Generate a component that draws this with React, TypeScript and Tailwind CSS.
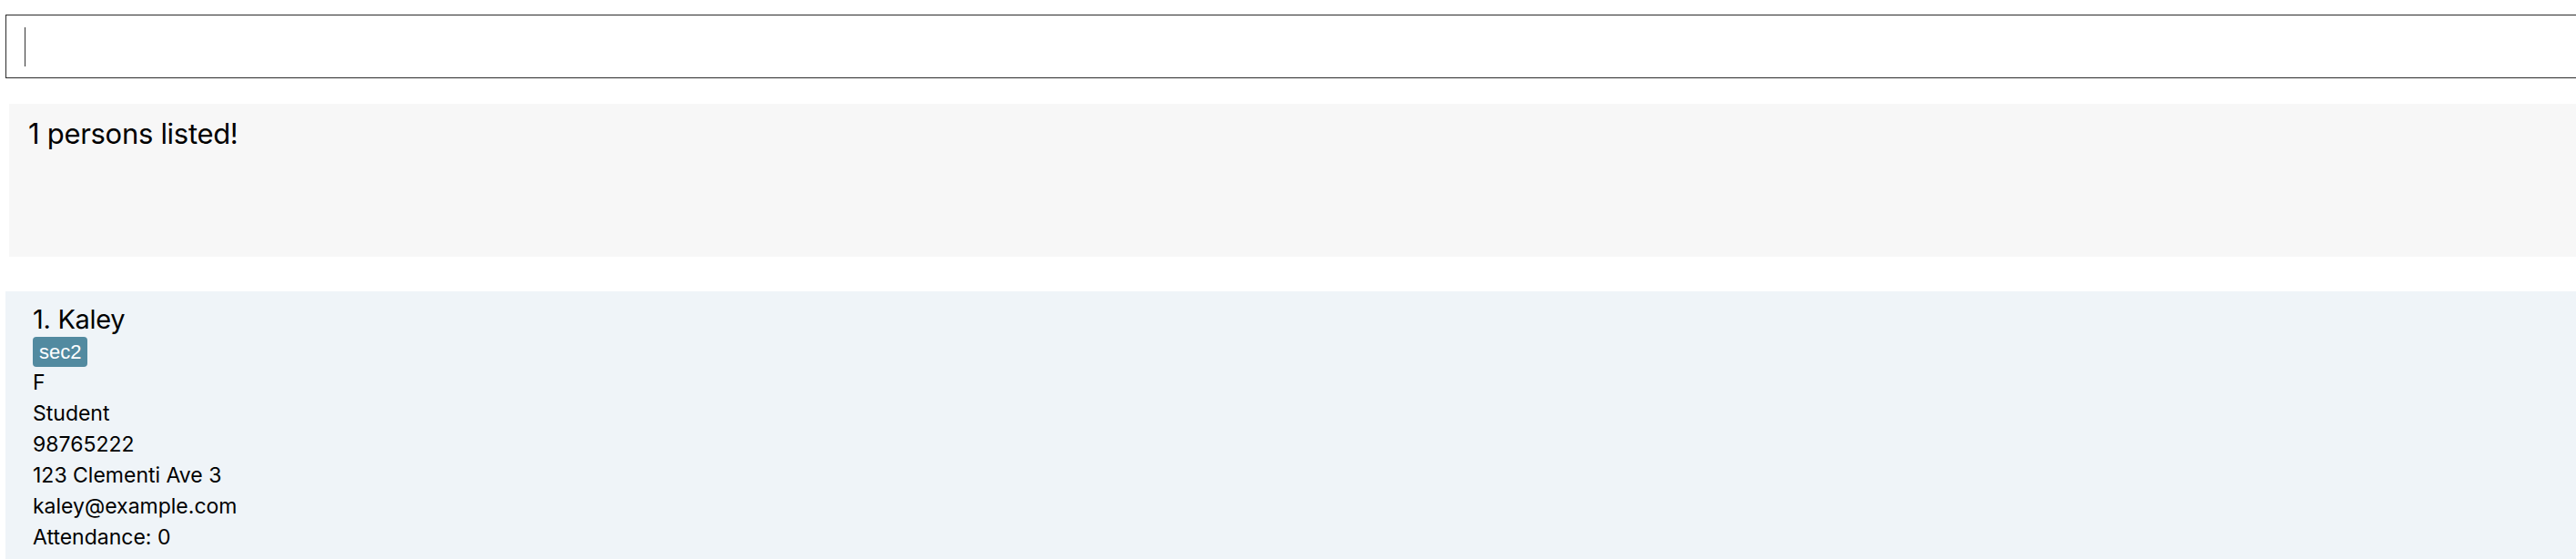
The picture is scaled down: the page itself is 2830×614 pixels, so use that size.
export default function App() {
  const fields = ["F", "Student", "98765222", "123 Clementi Ave 3", "kaley@example.com", "Attendance: 0"];

  return (
    <div className="w-screen h-[614px] overflow-hidden bg-white font-['Inter',sans-serif] text-black">
      <div className="pt-[16px] pl-[6px] mr-[-20px]">
        <div className="h-[70px] border border-[#2b2b2b] flex items-center pl-[20px]">
          <div className="w-px h-[43px] bg-[#333]"></div>
        </div>
      </div>

      <div className="mt-[28px] ml-[10px] mr-[-20px] h-[168px] bg-[#f7f7f7] pl-[21px] pt-[13px]">
        <p className="text-[31px] leading-[40px] tracking-[-0.3px]">1 persons listed!</p>
      </div>

      <div className="mt-[38px] ml-[6px] mr-[-20px] h-[300px] bg-[#eff4f8] pl-[30px] pt-[12px]">
        <p className="text-[29px] leading-[38px] tracking-[-0.3px]">1. Kaley</p>
        <div className="flex">
          <span className="bg-[#528aa0] text-white rounded-[4px] px-[7px] h-[33px] text-[22px] leading-[33px] font-['Liberation_Sans',sans-serif]">
            sec2
          </span>
        </div>
        {fields.map((f, i) => (
          <p key={i} className="text-[23px] leading-[34px]">
            {f}
          </p>
        ))}
      </div>
    </div>
  );
}
